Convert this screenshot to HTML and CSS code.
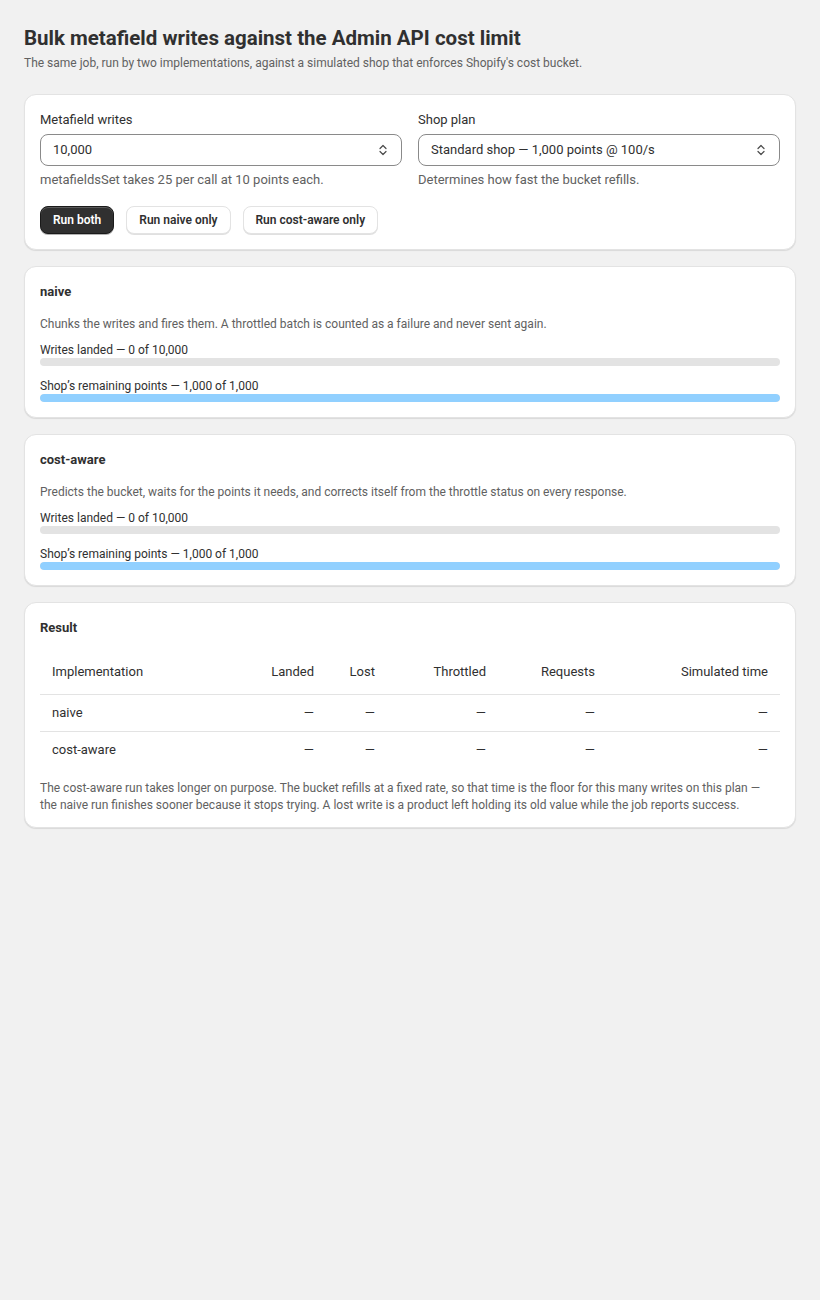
FILE: index.html
```html
<!DOCTYPE html>
<html lang="en">
<head>
<meta charset="utf-8">
<title>Bulk metafield writes</title>
<link rel="stylesheet" href="styles.css">
</head>
<body>
<main class="page">
  <header class="head">
    <h1 class="title">Bulk metafield writes against the Admin API cost limit</h1>
    <p class="subtitle">The same job, run by two implementations, against a simulated shop that enforces Shopify's cost bucket.</p>
  </header>

  <section class="card">
    <div class="fields">
      <div class="field">
        <label class="label">Metafield writes</label>
        <div class="select">
          <span>10,000</span>
          <svg class="chev" width="12" height="16" viewBox="0 0 12 16"><path d="M3 6.5 6 3.5 9 6.5M3 9.5 6 12.5 9 9.5" fill="none" stroke="#4a4a4a" stroke-width="1.2" stroke-linecap="round" stroke-linejoin="round"/></svg>
        </div>
        <p class="help">metafieldsSet takes 25 per call at 10 points each.</p>
      </div>
      <div class="field">
        <label class="label">Shop plan</label>
        <div class="select">
          <span>Standard shop — 1,000 points @ 100/s</span>
          <svg class="chev" width="12" height="16" viewBox="0 0 12 16"><path d="M3 6.5 6 3.5 9 6.5M3 9.5 6 12.5 9 9.5" fill="none" stroke="#4a4a4a" stroke-width="1.2" stroke-linecap="round" stroke-linejoin="round"/></svg>
        </div>
        <p class="help">Determines how fast the bucket refills.</p>
      </div>
    </div>
    <div class="buttons">
      <button class="btn btn-primary">Run both</button>
      <button class="btn">Run naive only</button>
      <button class="btn">Run cost-aware only</button>
    </div>
  </section>

  <section class="card impl">
    <h2 class="card-title">naive</h2>
    <p class="desc">Chunks the writes and fires them. A throttled batch is counted as a failure and never sent again.</p>
    <div class="meter">
      <div class="meter-label">Writes landed — 0 of 10,000</div>
      <div class="bar"><div class="fill fill-gray" style="width:0%"></div></div>
    </div>
    <div class="meter">
      <div class="meter-label">Shop’s remaining points — 1,000 of 1,000</div>
      <div class="bar"><div class="fill fill-blue" style="width:100%"></div></div>
    </div>
  </section>

  <section class="card impl">
    <h2 class="card-title">cost-aware</h2>
    <p class="desc">Predicts the bucket, waits for the points it needs, and corrects itself from the throttle status on every response.</p>
    <div class="meter">
      <div class="meter-label">Writes landed — 0 of 10,000</div>
      <div class="bar"><div class="fill fill-gray" style="width:0%"></div></div>
    </div>
    <div class="meter">
      <div class="meter-label">Shop’s remaining points — 1,000 of 1,000</div>
      <div class="bar"><div class="fill fill-blue" style="width:100%"></div></div>
    </div>
  </section>

  <section class="card result">
    <h2 class="card-title">Result</h2>
    <table class="table">
      <colgroup>
        <col class="c-impl"><col class="c-landed"><col class="c-lost"><col class="c-thr"><col class="c-req"><col class="c-time">
      </colgroup>
      <thead>
        <tr><th class="left">Implementation</th><th>Landed</th><th>Lost</th><th>Throttled</th><th>Requests</th><th>Simulated time</th></tr>
      </thead>
      <tbody>
        <tr><td class="left">naive</td><td>—</td><td>—</td><td>—</td><td>—</td><td>—</td></tr>
        <tr><td class="left">cost-aware</td><td>—</td><td>—</td><td>—</td><td>—</td><td>—</td></tr>
      </tbody>
    </table>
    <p class="note">The cost-aware run takes longer on purpose. The bucket refills at a fixed rate, so that time is the floor for this many writes on this plan — the naive run finishes sooner because it stops trying. A lost write is a product left holding its old value while the job reports success.</p>
  </section>
</main>
</body>
</html>
```
FILE: styles.css
```css
* { box-sizing: border-box; }
html, body { margin: 0; padding: 0; }
body {
  background: #f1f1f1;
  color: #303030;
  font-family: Roboto, "Liberation Sans", sans-serif;
  font-size: 13px;
  line-height: 20px;
}
.page {
  padding: 24px 24px;
  display: flex;
  flex-direction: column;
  gap: 16px;
}
.head { margin-bottom: 7px; }
.title {
  margin: 0;
  font-size: 20.5px;
  line-height: 28px;
  font-weight: 700;
  color: #303030;
}
.subtitle {
  margin: 3px 0 0;
  font-size: 12px;
  line-height: 16px;
  color: #616161;
}
.card {
  background: #fff;
  border: 1px solid #e3e3e3;
  border-radius: 12px;
  box-shadow: 0 1px 1px rgba(0,0,0,0.10);
  padding: 15px;
}
.fields {
  display: grid;
  grid-template-columns: 1fr 1fr;
  gap: 16px;
}
.field { display: flex; flex-direction: column; }
.label { display: block; font-size: 13px; line-height: 20px; margin-bottom: 4px; }
.select {
  height: 32px;
  border: 1px solid #8a8a8a;
  border-radius: 8px;
  display: flex;
  align-items: center;
  justify-content: space-between;
  padding: 0 12px 0 12px;
  font-size: 13px;
  color: #303030;
}
.chev { flex: none; }
.help { margin: 6px 0 0; font-size: 13px; line-height: 16px; color: #616161; }
.buttons { display: flex; gap: 12px; margin-top: 18px; }
.btn {
  font-family: inherit;
  font-size: 12px;
  font-weight: 600;
  line-height: 16px;
  height: 28px;
  padding: 0 12px;
  border-radius: 8px;
  border: 1px solid #e3e3e3;
  background: #fff;
  color: #303030;
  box-shadow: 0 1px 0 rgba(0,0,0,0.12);
}
.btn-primary {
  background: #303030;
  border-color: #1a1a1a;
  color: #fff;
  box-shadow: inset 0 1px 0 rgba(255,255,255,0.2), 0 1px 0 rgba(0,0,0,0.3);
}
.impl { display: flex; flex-direction: column; }
.card-title { margin: 0; font-size: 13px; line-height: 20px; font-weight: 700; }
.desc { margin: 14px 0 10px; font-size: 12px; line-height: 16px; color: #616161; }
.meter + .meter { margin-top: 12px; }
.meter-label { font-size: 12px; line-height: 16px; color: #303030; }
.bar { height: 8px; border-radius: 4px; background: #e3e3e3; overflow: hidden; }
.fill { height: 100%; border-radius: 4px; }
.fill-gray { background: #cfcfcf; }
.fill-blue { background: #91d0ff; }
.result { padding-bottom: 13px; }
.table { width: 100%; border-collapse: collapse; table-layout: fixed; margin-top: 12px; }
.c-impl { width: 210px; } .c-landed { width: 76px; } .c-lost { width: 61px; }
.c-thr { width: 111px; } .c-req { width: 109px; } .c-time { width: 173px; }
.table th, .table td { text-align: right; padding: 0 12px; font-weight: 400; font-size: 13px; }
.table th { height: 44px; border-bottom: 1px solid #e3e3e3; }
.table td { height: 37px; }
.table tbody tr:first-child td { border-bottom: 1px solid #e3e3e3; }
.table .left { text-align: left; }
.note { margin: 12px 0 0; padding-right: 10px; font-size: 12px; line-height: 17px; color: #616161; }
```
